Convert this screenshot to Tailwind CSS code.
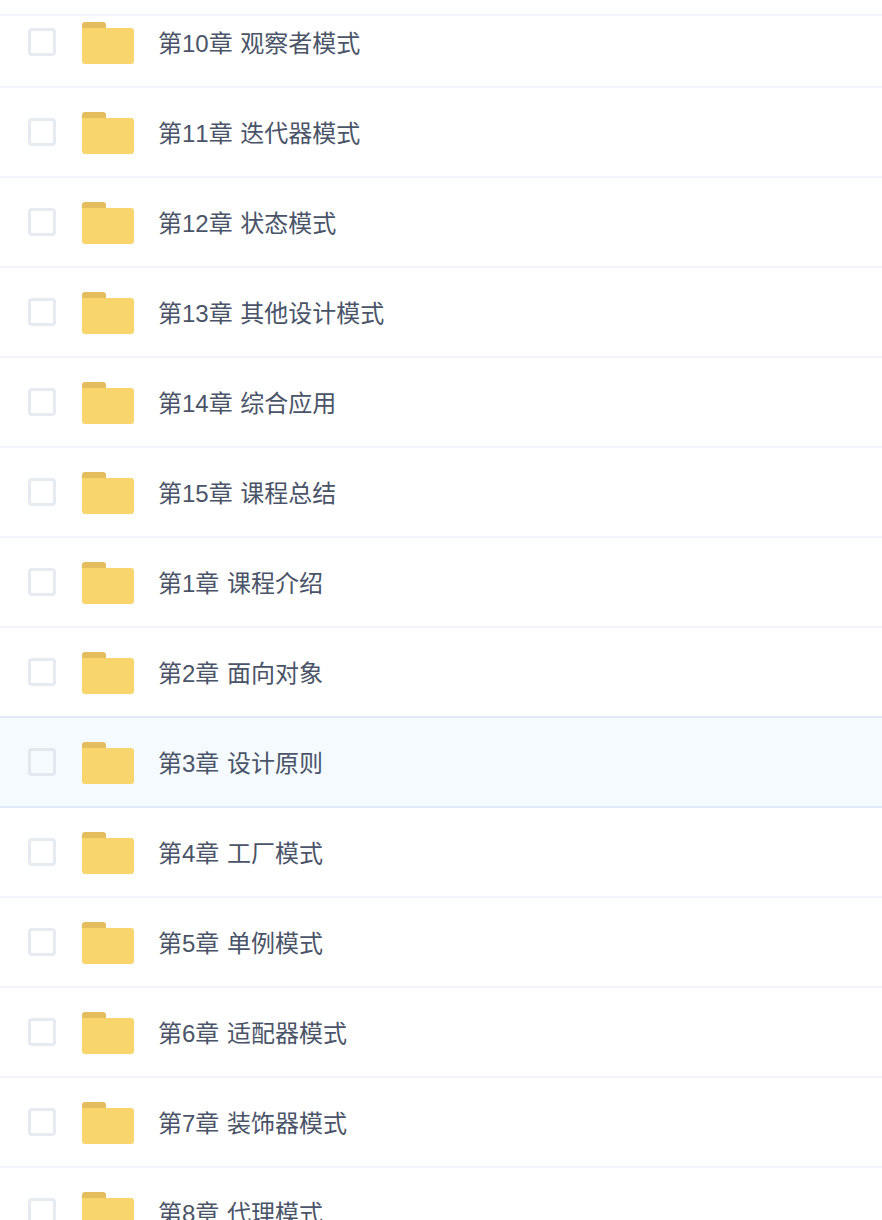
<!DOCTYPE html>
<html lang="zh-CN"><head><meta charset="utf-8"><script src="https://cdn.jsdelivr.net/npm/@tailwindcss/browser@4"></script></head>
<body class="bg-white overflow-hidden">
<div class="h-[1220px] overflow-hidden text-[24px] leading-[32px] text-[#4a5468] [font-kerning:none] [word-spacing:1px] font-['Liberation_Sans','Noto_Sans_CJK_SC',sans-serif]">
<div class="h-[16px] border-b-2 border-[#f2f6fc]"></div>
<div class="flex items-center h-[72px] pb-[18px] border-b-2 border-[#f2f6fc]"><span class="ml-[28px] w-[28px] h-[28px] rounded-[4px] border-[3px] border-[#e6ebf2] bg-white"></span><svg class="ml-[26px] mt-[2px] w-[52px] h-[42px]" viewBox="0 0 52 42"><path d="M3 0H21Q24 0 24 3V8H0V3Q0 0 3 0Z" fill="#e3bd5e"/><path d="M0 6H49Q52 6 52 9V39Q52 42 49 42H3Q0 42 0 39Z" fill="#f9d56d"/></svg><span class="ml-[24px] mt-[4px]">第10章 观察者模式</span></div>
<div class="flex items-center h-[90px] border-b-2 border-[#f2f6fc]"><span class="ml-[28px] w-[28px] h-[28px] rounded-[4px] border-[3px] border-[#e6ebf2] bg-white"></span><svg class="ml-[26px] mt-[2px] w-[52px] h-[42px]" viewBox="0 0 52 42"><path d="M3 0H21Q24 0 24 3V8H0V3Q0 0 3 0Z" fill="#e3bd5e"/><path d="M0 6H49Q52 6 52 9V39Q52 42 49 42H3Q0 42 0 39Z" fill="#f9d56d"/></svg><span class="ml-[24px] mt-[4px]">第11章 迭代器模式</span></div>
<div class="flex items-center h-[90px] border-b-2 border-[#f2f6fc]"><span class="ml-[28px] w-[28px] h-[28px] rounded-[4px] border-[3px] border-[#e6ebf2] bg-white"></span><svg class="ml-[26px] mt-[2px] w-[52px] h-[42px]" viewBox="0 0 52 42"><path d="M3 0H21Q24 0 24 3V8H0V3Q0 0 3 0Z" fill="#e3bd5e"/><path d="M0 6H49Q52 6 52 9V39Q52 42 49 42H3Q0 42 0 39Z" fill="#f9d56d"/></svg><span class="ml-[24px] mt-[4px]">第12章 状态模式</span></div>
<div class="flex items-center h-[90px] border-b-2 border-[#f2f6fc]"><span class="ml-[28px] w-[28px] h-[28px] rounded-[4px] border-[3px] border-[#e6ebf2] bg-white"></span><svg class="ml-[26px] mt-[2px] w-[52px] h-[42px]" viewBox="0 0 52 42"><path d="M3 0H21Q24 0 24 3V8H0V3Q0 0 3 0Z" fill="#e3bd5e"/><path d="M0 6H49Q52 6 52 9V39Q52 42 49 42H3Q0 42 0 39Z" fill="#f9d56d"/></svg><span class="ml-[24px] mt-[4px]">第13章 其他设计模式</span></div>
<div class="flex items-center h-[90px] border-b-2 border-[#f2f6fc]"><span class="ml-[28px] w-[28px] h-[28px] rounded-[4px] border-[3px] border-[#e6ebf2] bg-white"></span><svg class="ml-[26px] mt-[2px] w-[52px] h-[42px]" viewBox="0 0 52 42"><path d="M3 0H21Q24 0 24 3V8H0V3Q0 0 3 0Z" fill="#e3bd5e"/><path d="M0 6H49Q52 6 52 9V39Q52 42 49 42H3Q0 42 0 39Z" fill="#f9d56d"/></svg><span class="ml-[24px] mt-[4px]">第14章 综合应用</span></div>
<div class="flex items-center h-[90px] border-b-2 border-[#f2f6fc]"><span class="ml-[28px] w-[28px] h-[28px] rounded-[4px] border-[3px] border-[#e6ebf2] bg-white"></span><svg class="ml-[26px] mt-[2px] w-[52px] h-[42px]" viewBox="0 0 52 42"><path d="M3 0H21Q24 0 24 3V8H0V3Q0 0 3 0Z" fill="#e3bd5e"/><path d="M0 6H49Q52 6 52 9V39Q52 42 49 42H3Q0 42 0 39Z" fill="#f9d56d"/></svg><span class="ml-[24px] mt-[4px]">第15章 课程总结</span></div>
<div class="flex items-center h-[90px] border-b-2 border-[#f2f6fc]"><span class="ml-[28px] w-[28px] h-[28px] rounded-[4px] border-[3px] border-[#e6ebf2] bg-white"></span><svg class="ml-[26px] mt-[2px] w-[52px] h-[42px]" viewBox="0 0 52 42"><path d="M3 0H21Q24 0 24 3V8H0V3Q0 0 3 0Z" fill="#e3bd5e"/><path d="M0 6H49Q52 6 52 9V39Q52 42 49 42H3Q0 42 0 39Z" fill="#f9d56d"/></svg><span class="ml-[24px] mt-[4px]">第1章 课程介绍</span></div>
<div class="flex items-center h-[90px] border-b-2 border-[#dfebfa]"><span class="ml-[28px] w-[28px] h-[28px] rounded-[4px] border-[3px] border-[#e6ebf2] bg-white"></span><svg class="ml-[26px] mt-[2px] w-[52px] h-[42px]" viewBox="0 0 52 42"><path d="M3 0H21Q24 0 24 3V8H0V3Q0 0 3 0Z" fill="#e3bd5e"/><path d="M0 6H49Q52 6 52 9V39Q52 42 49 42H3Q0 42 0 39Z" fill="#f9d56d"/></svg><span class="ml-[24px] mt-[4px]">第2章 面向对象</span></div>
<div class="flex items-center h-[90px] border-b-2 border-[#dfebfa] bg-[#f5faff]"><span class="ml-[28px] w-[28px] h-[28px] rounded-[4px] border-[3px] border-[#e2e8f0] bg-[#f5faff]"></span><svg class="ml-[26px] mt-[2px] w-[52px] h-[42px]" viewBox="0 0 52 42"><path d="M3 0H21Q24 0 24 3V8H0V3Q0 0 3 0Z" fill="#e3bd5e"/><path d="M0 6H49Q52 6 52 9V39Q52 42 49 42H3Q0 42 0 39Z" fill="#f9d56d"/></svg><span class="ml-[24px] mt-[4px]">第3章 设计原则</span></div>
<div class="flex items-center h-[90px] border-b-2 border-[#f2f6fc]"><span class="ml-[28px] w-[28px] h-[28px] rounded-[4px] border-[3px] border-[#e6ebf2] bg-white"></span><svg class="ml-[26px] mt-[2px] w-[52px] h-[42px]" viewBox="0 0 52 42"><path d="M3 0H21Q24 0 24 3V8H0V3Q0 0 3 0Z" fill="#e3bd5e"/><path d="M0 6H49Q52 6 52 9V39Q52 42 49 42H3Q0 42 0 39Z" fill="#f9d56d"/></svg><span class="ml-[24px] mt-[4px]">第4章 工厂模式</span></div>
<div class="flex items-center h-[90px] border-b-2 border-[#f2f6fc]"><span class="ml-[28px] w-[28px] h-[28px] rounded-[4px] border-[3px] border-[#e6ebf2] bg-white"></span><svg class="ml-[26px] mt-[2px] w-[52px] h-[42px]" viewBox="0 0 52 42"><path d="M3 0H21Q24 0 24 3V8H0V3Q0 0 3 0Z" fill="#e3bd5e"/><path d="M0 6H49Q52 6 52 9V39Q52 42 49 42H3Q0 42 0 39Z" fill="#f9d56d"/></svg><span class="ml-[24px] mt-[4px]">第5章 单例模式</span></div>
<div class="flex items-center h-[90px] border-b-2 border-[#f2f6fc]"><span class="ml-[28px] w-[28px] h-[28px] rounded-[4px] border-[3px] border-[#e6ebf2] bg-white"></span><svg class="ml-[26px] mt-[2px] w-[52px] h-[42px]" viewBox="0 0 52 42"><path d="M3 0H21Q24 0 24 3V8H0V3Q0 0 3 0Z" fill="#e3bd5e"/><path d="M0 6H49Q52 6 52 9V39Q52 42 49 42H3Q0 42 0 39Z" fill="#f9d56d"/></svg><span class="ml-[24px] mt-[4px]">第6章 适配器模式</span></div>
<div class="flex items-center h-[90px] border-b-2 border-[#f2f6fc]"><span class="ml-[28px] w-[28px] h-[28px] rounded-[4px] border-[3px] border-[#e6ebf2] bg-white"></span><svg class="ml-[26px] mt-[2px] w-[52px] h-[42px]" viewBox="0 0 52 42"><path d="M3 0H21Q24 0 24 3V8H0V3Q0 0 3 0Z" fill="#e3bd5e"/><path d="M0 6H49Q52 6 52 9V39Q52 42 49 42H3Q0 42 0 39Z" fill="#f9d56d"/></svg><span class="ml-[24px] mt-[4px]">第7章 装饰器模式</span></div>
<div class="flex items-center h-[90px] border-b-2 border-[#f2f6fc]"><span class="ml-[28px] w-[28px] h-[28px] rounded-[4px] border-[3px] border-[#e6ebf2] bg-white"></span><svg class="ml-[26px] mt-[2px] w-[52px] h-[42px]" viewBox="0 0 52 42"><path d="M3 0H21Q24 0 24 3V8H0V3Q0 0 3 0Z" fill="#e3bd5e"/><path d="M0 6H49Q52 6 52 9V39Q52 42 49 42H3Q0 42 0 39Z" fill="#f9d56d"/></svg><span class="ml-[24px] mt-[4px]">第8章 代理模式</span></div>
</div>
</body></html>
